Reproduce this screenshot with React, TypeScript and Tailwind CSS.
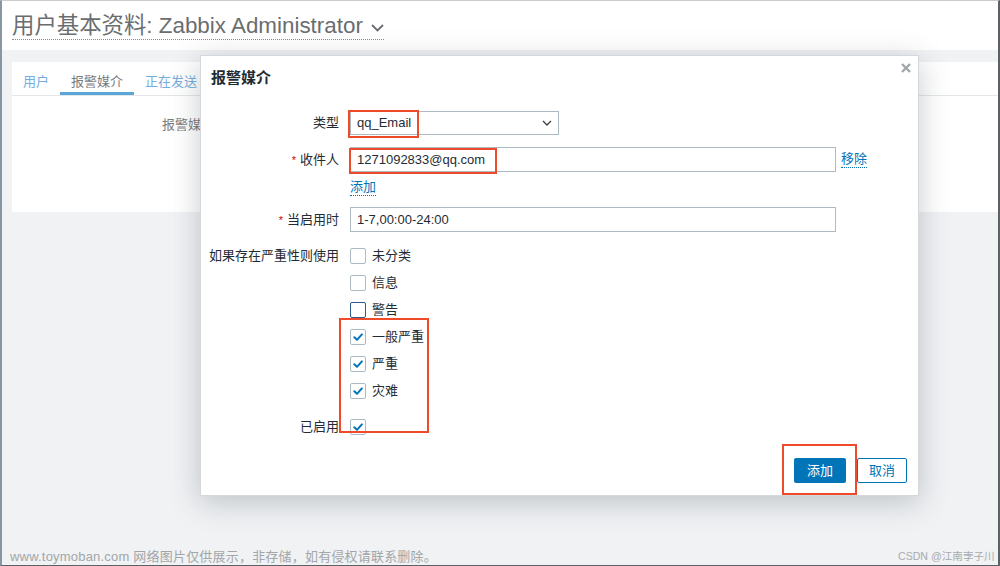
import React from "react";

const FONT = '"Liberation Sans", "Noto Sans CJK SC", Arial, sans-serif';

function Check({ checked, focus }: { checked?: boolean; focus?: boolean }) {
  return (
    <div
      className={
        "w-[16px] h-[16px] shrink-0 rounded-[2px] bg-white flex items-center justify-center border " +
        (focus ? "border-[#2a5d8c]" : "border-[#acbbc2]")
      }
    >
      {checked && (
        <svg width="12" height="12" viewBox="0 0 12 12">
          <path d="M2.3 6.2 L5 8.8 L9.9 3.4" fill="none" stroke="#0275b8" strokeWidth="2" strokeLinecap="round" strokeLinejoin="round" />
        </svg>
      )}
    </div>
  );
}

function Label({ children, req }: { children: React.ReactNode; req?: boolean }) {
  return (
    <div className="w-[138px] shrink-0 text-right text-[13px] leading-[16px] text-[#1f2c33]">
      {req && <span className="text-[#d40000] text-[11px] mr-[4px]">*</span>}
      {children}
    </div>
  );
}

export default function App() {
  const severities: [string, boolean, boolean][] = [
    ["未分类", false, false],
    ["信息", false, false],
    ["警告", false, true],
    ["一般严重", true, false],
    ["严重", true, false],
    ["灾难", true, false],
  ];
  return (
    <div
      className="relative w-[1000px] h-[566px] overflow-hidden bg-[#f0f2f4] border-l-2 border-t border-r-2 border-b border-l-[#8796a3] border-t-[#c9cdd1] border-r-[#5d6166] border-b-[#5d6166]"
      style={{ fontFamily: FONT }}
    >
      {/* header */}
      <div className="h-[49px] bg-white pl-[10px] pt-[12px]">
        <span className="inline-flex items-center border-b border-dotted border-[#8a8a8a] text-[22.4px] leading-[26px] text-[#6a6d70]">
          用户基本资料: Zabbix Administrator
          <svg className="ml-[8px] mt-[4px]" width="13" height="8" viewBox="0 0 13 8">
            <path d="M1 1 L6.5 6.5 L12 1" fill="none" stroke="#6a6d70" strokeWidth="1.8" />
          </svg>
        </span>
      </div>

      {/* card */}
      <div className="mt-[12px] ml-[10px] h-[150px] bg-white">
        <div className="flex h-[34px] border-b border-[#e3e7ea] text-[13px]">
          <div className="px-[11px] pt-[10px] text-[#74ade0]">用户</div>
          <div className="px-[11px] pt-[10px] text-[#7a7c7e] border-b-[3px] border-[#5aa6d6]">报警媒介</div>
          <div className="pl-[11px] pt-[10px] text-[#74ade0]">正在发送</div>
        </div>
        <div className="ml-[150px] mt-[21px] text-[13px] leading-[16px] text-[#7a7c7e]">报警媒</div>
      </div>

      {/* modal */}
      <div className="absolute left-[198px] top-[54px] w-[719px] h-[441px] bg-white border border-[#d3d8dc] shadow-[0_6px_28px_rgba(60,70,80,0.28)] flex flex-col">
        <div className="h-[45px] shrink-0 flex items-center pl-[10px] text-[15px] font-bold text-[#1f2c33]">报警媒介</div>
        <svg className="absolute right-[7px] top-[7px]" width="10" height="10" viewBox="0 0 10 10">
          <path d="M1 1 L9 9 M9 1 L1 9" stroke="#a2a7ab" strokeWidth="2.4" />
        </svg>

        {/* 类型 */}
        <div className="mt-[10px] flex items-center">
          <Label>类型</Label>
          <div className="ml-[11px] w-[209px] h-[24px] border border-[#acbbc2] flex items-center justify-between pl-[6px] pr-[6px] text-[13px] text-[#1f2c33]">
            <span>qq_Email</span>
            <svg width="10" height="6" viewBox="0 0 10 6">
              <path d="M1 1 L5 5 L9 1" fill="none" stroke="#3a3f44" strokeWidth="1.3" />
            </svg>
          </div>
        </div>

        {/* 收件人 */}
        <div className="mt-[12px] flex items-center">
          <Label req>收件人</Label>
          <div className="ml-[11px] w-[486px] h-[25px] border border-[#acbbc2] flex items-center pl-[6px] text-[13px] text-[#1f2c33]">
            1271092833@qq.com
          </div>
          <span className="ml-[5px] text-[13px] leading-[16px] text-[#0275b8] border-b border-dotted border-[#0275b8]">移除</span>
        </div>

        {/* 添加 link */}
        <div className="mt-[7px] flex">
          <div className="w-[138px] shrink-0" />
          <span className="ml-[11px] text-[13px] leading-[16px] text-[#0275b8] border-b border-dotted border-[#0275b8]">添加</span>
        </div>

        {/* 当启用时 */}
        <div className="mt-[11px] flex items-center">
          <Label req>当启用时</Label>
          <div className="ml-[11px] w-[486px] h-[25px] border border-[#acbbc2] flex items-center pl-[6px] text-[13px] text-[#1f2c33]">
            1-7,00:00-24:00
          </div>
        </div>

        {/* severities */}
        <div className="mt-[16px] flex items-start">
          <Label>如果存在严重性则使用</Label>
          <div className="ml-[11px] flex flex-col gap-[11px]">
            {severities.map(([name, checked, focus]) => (
              <div key={name} className="flex items-center h-[16px]">
                <Check checked={checked} focus={focus} />
                <span className="ml-[6px] text-[13px] leading-[16px] text-[#1f2c33]">{name}</span>
              </div>
            ))}
          </div>
        </div>

        {/* 已启用 */}
        <div className="mt-[20px] flex items-center">
          <Label>已启用</Label>
          <div className="ml-[11px]">
            <Check checked />
          </div>
        </div>

        {/* buttons */}
        <div className="mt-[23px] flex justify-end gap-[11px] pr-[11px]">
          <div className="w-[52px] h-[25px] rounded-[2px] bg-[#0275b8] text-white text-[13px] flex items-center justify-center">添加</div>
          <div className="w-[50px] h-[25px] rounded-[2px] bg-white border border-[#0275b8] text-[#0275b8] text-[13px] flex items-center justify-center">取消</div>
        </div>
      </div>

      {/* annotation boxes */}
      <div className="absolute left-[346px] top-[109px] w-[71px] h-[28px] border-2 border-[#f04a2a]" />
      <div className="absolute left-[347px] top-[147px] w-[148px] h-[26px] border-2 border-[#f04a2a]" />
      <div className="absolute left-[337px] top-[317px] w-[90px] h-[115px] border-2 border-[#f04a2a]" />
      <div className="absolute left-[780px] top-[443px] w-[75px] h-[51px] border-2 border-[#f04a2a]" />

      {/* watermarks */}
      <div className="absolute left-[8px] top-[548px] whitespace-nowrap text-[13px] leading-[16px] text-[#a3a6a9] tracking-[0.2px]">
        www.toymoban.com 网络图片仅供展示，非存储，如有侵权请联系删除。
      </div>
      <div className="absolute left-[896px] top-[548px] whitespace-nowrap text-[10.6px] leading-[14px] text-[#a8abae]">CSDN @江南孛子川</div>
    </div>
  );
}
